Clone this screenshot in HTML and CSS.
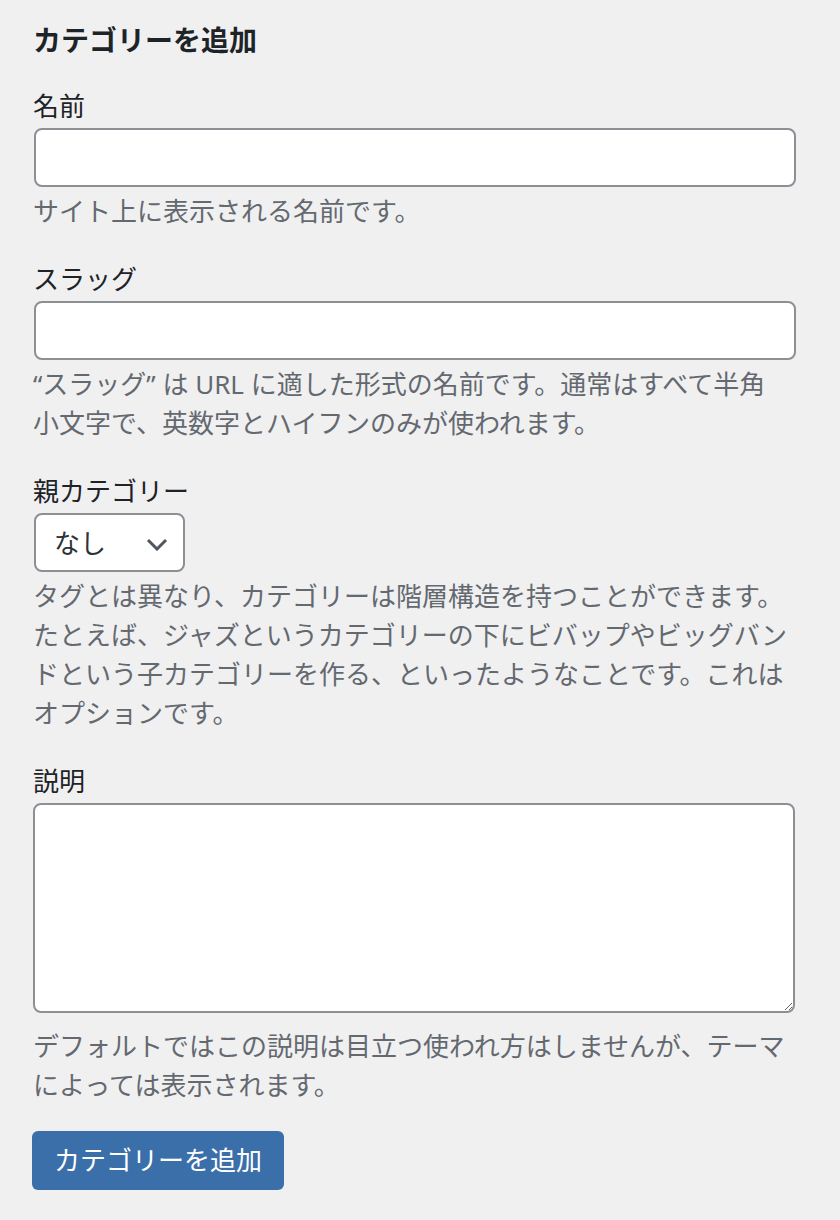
FILE: index.html
```html
<!DOCTYPE html>
<html lang="ja">
<head>
<meta charset="utf-8">
<title>カテゴリーを追加</title>
<link rel="stylesheet" href="styles.css">
</head>
<body>
<div class="form-wrap">
  <h2 class="form-title">カテゴリーを追加</h2>

  <div class="field">
    <label class="field-label" for="tag-name">名前</label>
    <input class="text-input" type="text" id="tag-name">
    <p class="help">サイト上に表示される名前です。</p>
  </div>

  <div class="field">
    <label class="field-label" for="tag-slug">スラッグ</label>
    <input class="text-input" type="text" id="tag-slug">
    <p class="help">“スラッグ” は URL に適した形式の名前です。通常はすべて半角小文字で、英数字とハイフンのみが使われます。</p>
  </div>

  <div class="field">
    <label class="field-label" for="parent">親カテゴリー</label>
    <div class="select-wrap">
      <select class="select" id="parent">
        <option>なし</option>
      </select>
      <svg class="chevron" width="22" height="13" viewBox="0 0 22 13" aria-hidden="true">
        <polyline points="2,2 11,11 20,2" fill="none" stroke="#50575e" stroke-width="3"/>
      </svg>
    </div>
    <p class="help">タグとは異なり、カテゴリーは階層構造を持つことができます。たとえば、ジャズというカテゴリーの下にビバップやビッグバンドという子カテゴリーを作る、といったようなことです。これはオプションです。</p>
  </div>

  <div class="field">
    <label class="field-label" for="tag-description">説明</label>
    <textarea class="textarea" id="tag-description"></textarea>
    <p class="help help-after-textarea">デフォルトではこの説明は目立つ使われ方はしませんが、テーマによっては表示されます。</p>
  </div>

  <button class="button-primary" type="button">カテゴリーを追加</button>
</div>
</body>
</html>
```

FILE: styles.css
```css
html, body {
  margin: 0;
  padding: 0;
  background: #f0f0f1;
}

body {
  font-family: "Noto Sans", "Noto Sans CJK JP", sans-serif;
  color: #1d2327;
}

.form-wrap {
  width: 762px;
  padding: 22px 0 0 33px;
}

.form-title {
  margin: 0;
  font-size: 28px;
  line-height: 36px;
  font-weight: 700;
  color: #1d2327;
}

.field {
  margin-top: 30px;
}

.field-label {
  display: block;
  font-size: 26px;
  line-height: 37px;
  margin-bottom: 3px;
  color: #1d2327;
}

.text-input {
  display: block;
  box-sizing: border-box;
  width: 762px;
  height: 59px;
  margin: 0 0 0 1px;
  padding: 0 16px;
  border: 2px solid #8c8f94;
  border-radius: 8px;
  background: #fff;
  font-family: inherit;
  font-size: 26px;
  color: #2c3338;
  outline: none;
}

.help {
  width: 758px;
  margin: 5px 0 0;
  font-size: 26px;
  line-height: 39px;
  color: #646970;
}

.help-after-textarea {
  margin-top: 14px;
}

.select-wrap {
  position: relative;
  width: 151px;
  height: 59px;
  margin-left: 1px;
}

.select {
  display: block;
  box-sizing: border-box;
  width: 151px;
  height: 59px;
  margin: 0;
  padding: 0 0 0 18px;
  border: 2px solid #8c8f94;
  border-radius: 8px;
  background: #fff;
  -webkit-appearance: none;
  appearance: none;
  font-family: inherit;
  font-size: 26px;
  color: #2c3338;
  outline: none;
}

.chevron {
  position: absolute;
  right: 17px;
  top: 25px;
  pointer-events: none;
}

.textarea {
  display: block;
  box-sizing: border-box;
  width: 762px;
  height: 210px;
  margin: 0;
  padding: 8px 16px;
  border: 2px solid #8c8f94;
  border-radius: 8px;
  background: #fff;
  font-family: inherit;
  font-size: 26px;
  color: #2c3338;
  resize: vertical;
  outline: none;
}

.button-primary {
  display: block;
  box-sizing: border-box;
  height: 59px;
  margin: 26px 0 0 -1px;
  padding: 0 22px;
  border: none;
  border-radius: 6px;
  background: #3a6fa9;
  color: #fff;
  font-family: inherit;
  font-size: 26px;
  line-height: 59px;
  cursor: pointer;
}
```
